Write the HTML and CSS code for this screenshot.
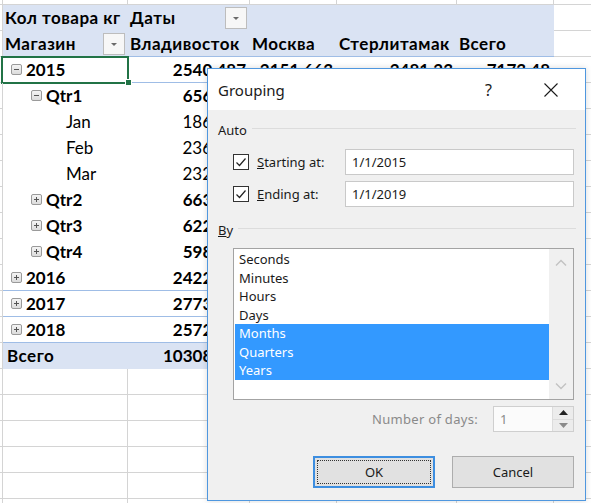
FILE: index.html
```html
<!DOCTYPE html>
<html>
<head>
  <title>Grouping</title>
  <link rel="stylesheet" href="styles.css">
</head>
<body>
  <div class="sheet">
    <div class="row edge">
      <div class="c"></div><div class="c"></div><div class="c"></div><div class="c"></div><div class="c"></div><div class="c"></div><div class="c"></div>
    </div>
    <div class="row">
      <div class="c"></div>
      <div class="c p head bold cy">Кол товара кг</div>
      <div class="c p head bold cy split">Даты <span class="dd"></span></div>
      <div class="c p head"></div>
      <div class="c p head"></div>
      <div class="c p head"></div>
      <div class="c"></div>
    </div>
    <div class="row">
      <div class="c"></div>
      <div class="c p head line bold cy split">Магазин <span class="dd"></span></div>
      <div class="c p head line bold cy">Владивосток</div>
      <div class="c p head line bold cy">Москва</div>
      <div class="c p head line bold cy">Стерлитамак</div>
      <div class="c p head line bold cy">Всего</div>
      <div class="c"></div>
    </div>
    <div class="row">
      <div class="c"></div>
      <div class="c p line bold year active"><span class="tog minus"></span>2015</div>
      <div class="c p line bold num">2540 487</div>
      <div class="c p line bold num">2151 663</div>
      <div class="c p line bold num">2481 23</div>
      <div class="c p line bold num">7173 48</div>
      <div class="c"></div>
    </div>
    <div class="row">
      <div class="c"></div>
      <div class="c p bold qtr"><span class="tog minus"></span>Qtr1</div>
      <div class="c p bold num">656 210</div>
      <div class="c p"></div>
      <div class="c p"></div>
      <div class="c p"></div>
      <div class="c"></div>
    </div>
    <div class="row">
      <div class="c"></div>
      <div class="c p month">Jan</div>
      <div class="c p num">186 540</div>
      <div class="c p"></div>
      <div class="c p"></div>
      <div class="c p"></div>
      <div class="c"></div>
    </div>
    <div class="row">
      <div class="c"></div>
      <div class="c p month">Feb</div>
      <div class="c p num">236 115</div>
      <div class="c p"></div>
      <div class="c p"></div>
      <div class="c p"></div>
      <div class="c"></div>
    </div>
    <div class="row">
      <div class="c"></div>
      <div class="c p month">Mar</div>
      <div class="c p num">232 555</div>
      <div class="c p"></div>
      <div class="c p"></div>
      <div class="c p"></div>
      <div class="c"></div>
    </div>
    <div class="row">
      <div class="c"></div>
      <div class="c p bold qtr"><span class="tog"></span>Qtr2</div>
      <div class="c p bold num">663 902</div>
      <div class="c p"></div>
      <div class="c p"></div>
      <div class="c p"></div>
      <div class="c"></div>
    </div>
    <div class="row">
      <div class="c"></div>
      <div class="c p bold qtr"><span class="tog"></span>Qtr3</div>
      <div class="c p bold num">622 070</div>
      <div class="c p"></div>
      <div class="c p"></div>
      <div class="c p"></div>
      <div class="c"></div>
    </div>
    <div class="row">
      <div class="c"></div>
      <div class="c p bold qtr"><span class="tog"></span>Qtr4</div>
      <div class="c p bold num">598 305</div>
      <div class="c p"></div>
      <div class="c p"></div>
      <div class="c p"></div>
      <div class="c"></div>
    </div>
    <div class="row">
      <div class="c"></div>
      <div class="c p line bold year"><span class="tog"></span>2016</div>
      <div class="c p line bold num">2422 180</div>
      <div class="c p line"></div>
      <div class="c p line"></div>
      <div class="c p line"></div>
      <div class="c"></div>
    </div>
    <div class="row">
      <div class="c"></div>
      <div class="c p line bold year"><span class="tog"></span>2017</div>
      <div class="c p line bold num">2773 614</div>
      <div class="c p line"></div>
      <div class="c p line"></div>
      <div class="c p line"></div>
      <div class="c"></div>
    </div>
    <div class="row">
      <div class="c"></div>
      <div class="c p line bold year"><span class="tog"></span>2018</div>
      <div class="c p line bold num">2572 005</div>
      <div class="c p line"></div>
      <div class="c p line"></div>
      <div class="c p line"></div>
      <div class="c"></div>
    </div>
    <div class="row">
      <div class="c"></div>
      <div class="c p head bold cy total">Всего</div>
      <div class="c p head bold num">10308 286</div>
      <div class="c p head"></div>
      <div class="c p head"></div>
      <div class="c p head"></div>
      <div class="c"></div>
    </div>
    <div class="row"><div class="c"></div><div class="c"></div><div class="c"></div><div class="c"></div><div class="c"></div><div class="c"></div><div class="c"></div></div>
    <div class="row"><div class="c"></div><div class="c"></div><div class="c"></div><div class="c"></div><div class="c"></div><div class="c"></div><div class="c"></div></div>
    <div class="row"><div class="c"></div><div class="c"></div><div class="c"></div><div class="c"></div><div class="c"></div><div class="c"></div><div class="c"></div></div>
    <div class="row"><div class="c"></div><div class="c"></div><div class="c"></div><div class="c"></div><div class="c"></div><div class="c"></div><div class="c"></div></div>
    <div class="row"><div class="c"></div><div class="c"></div><div class="c"></div><div class="c"></div><div class="c"></div><div class="c"></div><div class="c"></div></div>
    <div class="row"><div class="c"></div><div class="c"></div><div class="c"></div><div class="c"></div><div class="c"></div><div class="c"></div><div class="c"></div></div>
  </div>

  <div class="dialog">
    <div class="title">
      <span class="title-text">Grouping</span>
      <span class="help">?</span>
      <span class="close">
        <svg width="16" height="16" viewBox="0 0 16 16"><path d="M1.5 1.5 L14.5 14.5 M14.5 1.5 L1.5 14.5" stroke="#1a1a1a" stroke-width="1.1" fill="none"/></svg>
      </span>
    </div>
    <div class="body">
      <div class="legend"><span>Auto</span><i></i></div>
      <div class="field first">
        <span class="check"><svg width="14" height="14" viewBox="0 0 14 14"><path d="M2.5 7.5 L5.5 10.5 L11.5 3.5" stroke="#222" stroke-width="1.2" fill="none"/></svg></span>
        <span class="label"><u>S</u>tarting at:</span>
        <div class="input">1/1/2015</div>
      </div>
      <div class="field">
        <span class="check"><svg width="14" height="14" viewBox="0 0 14 14"><path d="M2.5 7.5 L5.5 10.5 L11.5 3.5" stroke="#222" stroke-width="1.2" fill="none"/></svg></span>
        <span class="label"><u>E</u>nding at:</span>
        <div class="input">1/1/2019</div>
      </div>
      <div class="legend by"><span><u>B</u>y</span><i></i></div>
      <div class="list">
        <div class="items">
          <div>Seconds</div>
          <div>Minutes</div>
          <div>Hours</div>
          <div>Days</div>
          <div class="sel">Months</div>
          <div class="sel">Quarters</div>
          <div class="sel">Years</div>
        </div>
        <div class="scroll">
          <svg width="12" height="8" viewBox="0 0 12 8"><path d="M1 6.5 L6 1.5 L11 6.5" stroke="#c2c2c2" stroke-width="1.4" fill="none"/></svg>
          <svg width="12" height="8" viewBox="0 0 12 8"><path d="M1 1.5 L6 6.5 L11 1.5" stroke="#c2c2c2" stroke-width="1.4" fill="none"/></svg>
        </div>
      </div>
      <div class="days">
        <span class="days-label">Number of days:</span>
        <div class="spin">
          <span class="spin-value">1</span>
          <div class="arrows">
            <span><svg width="9" height="5" viewBox="0 0 9 5"><path d="M0 5 L4.5 0 L9 5 Z" fill="#222"/></svg></span>
            <span><svg width="9" height="5" viewBox="0 0 9 5"><path d="M0 0 L4.5 5 L9 0 Z" fill="#8a8a8a"/></svg></span>
          </div>
        </div>
      </div>
      <div class="buttons">
        <button class="btn ok"><span>OK</span></button>
        <button class="btn">Cancel</button>
      </div>
    </div>
  </div>
</body>
</html>
```

FILE: styles.css
```css
body {
  margin: 0;
  width: 591px;
  height: 503px;
  overflow: hidden;
  position: relative;
  background-color: #fff;
  font-family: Lato, "Noto Sans", sans-serif;
  font-size: 17px;
  color: #000;
}
.sheet {
  width: 591px;
}
.row {
  display: grid;
  grid-template-columns: 3px 125px 122px 87px 120px 97px 1fr;
  height: 26px;
}
.row.edge {
  height: 5px;
}
.c {
  box-sizing: border-box;
  border-right: 1px solid #d4d4d4;
  border-bottom: 1px solid #d4d4d4;
  display: flex;
  align-items: center;
  white-space: nowrap;
  padding-left: 2px;
  position: relative;
}
.c:last-child {
  border-right: none;
}
.c.p {
  border-right: none;
  border-bottom: 1px solid transparent;
}
.c.head {
  background-color: #dae3f3;
  border-bottom-color: #dae3f3;
}
.c.line {
  border-bottom: 1px solid #9fbde6;
}
.bold {
  font-weight: bold;
}
.cy {
  letter-spacing: 0.5px;
}
.split {
  justify-content: space-between;
  padding-right: 2px;
}
.head.split {
  padding-right: 3px;
}
.num {
  justify-content: flex-end;
  padding-right: 4px;
}
.year {
  padding-left: 8px;
}
.qtr {
  padding-left: 28px;
}
.month {
  padding-left: 63px;
}
.total {
  padding-left: 4px;
}
.tog {
  width: 9px;
  height: 9px;
  border: 1px solid #9a9a9a;
  border-radius: 2px;
  background: linear-gradient(#f4f4f4, #dcdcdc);
  margin-right: 4px;
  position: relative;
  flex: none;
}
.tog::before,
.tog::after {
  content: "";
  position: absolute;
  background-color: #555;
}
.tog::before {
  left: 2px;
  top: 4px;
  width: 5px;
  height: 1px;
}
.tog::after {
  left: 4px;
  top: 2px;
  width: 1px;
  height: 5px;
}
.tog.minus::after {
  display: none;
}
.dd {
  width: 22px;
  height: 22px;
  box-sizing: border-box;
  border: 1px solid #bdbdbd;
  background-color: #f7f7f7;
  position: relative;
  flex: none;
}
.dd::after {
  content: "";
  position: absolute;
  left: 7px;
  top: 9px;
  border-left: 3px solid transparent;
  border-right: 3px solid transparent;
  border-top: 3px solid #6a6a6a;
}
.active::after {
  content: "";
  position: absolute;
  left: -2px;
  top: -1px;
  right: -1px;
  bottom: -2px;
  border: 2px solid #217346;
}
.active::before {
  content: "";
  position: absolute;
  right: -4px;
  bottom: -4px;
  width: 5px;
  height: 5px;
  background-color: #217346;
  border: 1px solid #fff;
  z-index: 1;
}

/* dialog */
.dialog {
  position: absolute;
  left: 207px;
  top: 68px;
  width: 379px;
  box-sizing: border-box;
  border: 1px solid #4f97df;
  background-color: #f0f0f0;
  font-family: "Noto Sans", sans-serif;
  font-size: 13px;
  color: #1a1a1a;
  box-shadow: 0 0 6px rgba(0, 0, 0, 0.15);
  z-index: 5;
}
.title {
  height: 41px;
  background-color: #fff;
  display: flex;
  align-items: center;
  padding-left: 10px;
}
.title-text {
  font-size: 15px;
  flex: 1;
}
.help {
  font-size: 16px;
  width: 20px;
  margin-right: 38px;
}
.close {
  width: 16px;
  height: 16px;
  margin-right: 26px;
  display: flex;
}
.body {
  padding: 12px 11px 12px 10px;
}
.legend {
  height: 16px;
  display: flex;
  align-items: center;
}
.legend i {
  flex: 1;
  height: 1px;
  background-color: #dcdcdc;
  margin-left: 5px;
  margin-right: -2px;
  margin-top: -3px;
}
.legend.by {
  margin-top: 15px;
}
.field {
  display: flex;
  align-items: center;
  height: 26px;
  margin-top: 6px;
}
.field.first {
  margin-top: 11px;
}
.check {
  width: 14px;
  height: 14px;
  border: 1px solid #333;
  background-color: #fff;
  margin-left: 15px;
  margin-right: 8px;
  display: flex;
}
.input {
  margin-left: auto;
  width: 229px;
  height: 26px;
  box-sizing: border-box;
  border: 1px solid #c9c9c9;
  background-color: #fff;
  padding-left: 6px;
  display: flex;
  align-items: center;
}
.list {
  margin-top: 10px;
  margin-left: 15px;
  height: 152px;
  box-sizing: border-box;
  border: 1px solid #a3a3a3;
  background-color: #fff;
  display: flex;
}
.items {
  flex: 1;
  padding: 1px 0 0 1px;
}
.items div {
  height: 18.5px;
  line-height: 18.5px;
  padding-left: 4px;
}
.items .sel {
  background-color: #3399ff;
  color: #fff;
}
.scroll {
  width: 24px;
  background-color: #f0f0f0;
  display: flex;
  flex-direction: column;
  justify-content: space-between;
  align-items: center;
  padding: 10px 0 9px;
  box-sizing: border-box;
}
.days {
  margin-top: 6px;
  height: 26px;
  display: flex;
  justify-content: flex-end;
  align-items: center;
}
.days-label {
  color: #8a8a8a;
  margin-right: 15px;
  letter-spacing: 0.3px;
}
.spin {
  width: 81px;
  height: 26px;
  box-sizing: border-box;
  border: 1px solid #cfcfcf;
  background-color: #fbfbfb;
  display: flex;
}
.spin-value {
  flex: 1;
  color: #8a8a8a;
  padding-left: 6px;
  line-height: 24px;
}
.arrows {
  width: 20px;
  display: flex;
  flex-direction: column;
  border-left: 1px solid #dcdcdc;
}
.arrows span {
  flex: 1;
  display: flex;
  align-items: center;
  justify-content: center;
  background-color: #ececec;
}
.arrows span:first-child {
  border-bottom: 1px solid #dcdcdc;
}
.buttons {
  margin-top: 24px;
  display: flex;
  justify-content: flex-end;
  gap: 17px;
}
.btn {
  width: 122px;
  height: 32px;
  box-sizing: border-box;
  border: 1px solid #adadad;
  background-color: #e1e1e1;
  font-family: "Noto Sans", sans-serif;
  font-size: 13px;
  color: #1a1a1a;
  padding: 0;
}
.btn.ok {
  border: 2px solid #3d8ee0;
  padding: 2px;
}
.btn.ok span {
  display: flex;
  height: 100%;
  align-items: center;
  justify-content: center;
  border: 1px dotted #333;
  box-sizing: border-box;
}
```
